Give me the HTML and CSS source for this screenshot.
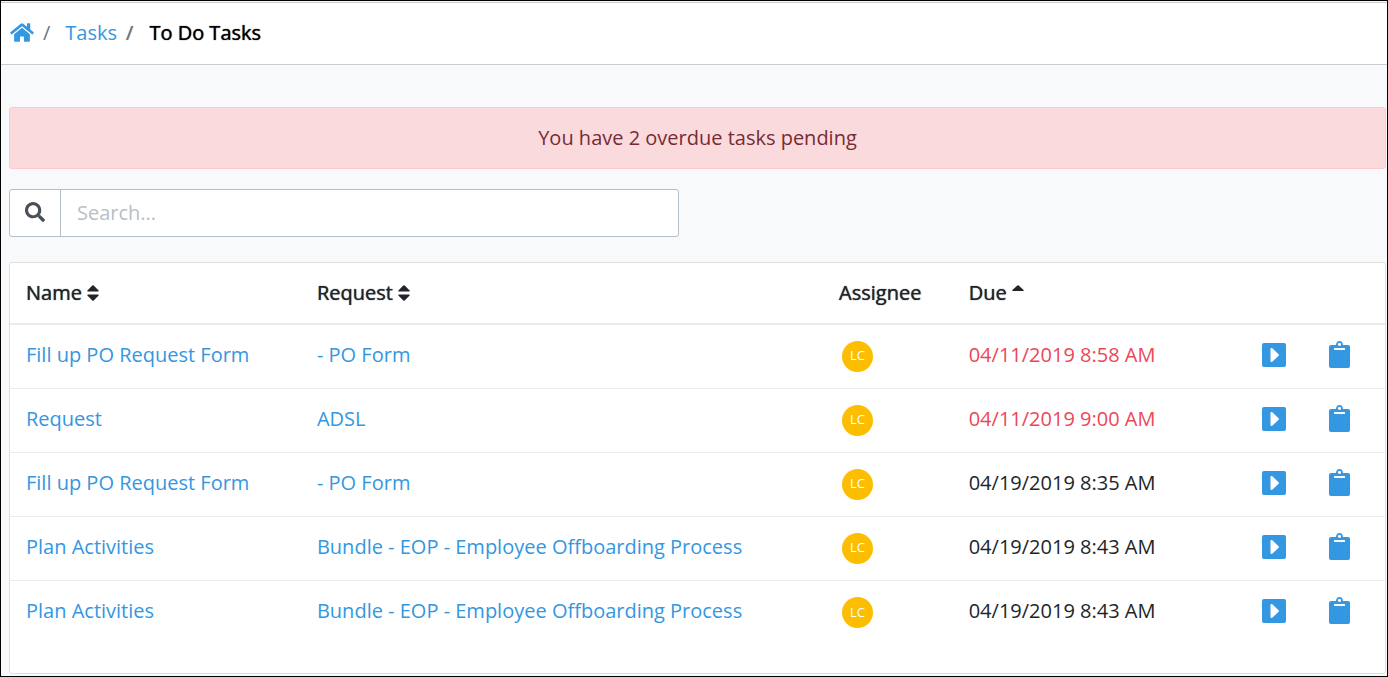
FILE: index.html
```html
<!DOCTYPE html>
<html lang="en">
<head>
<meta charset="utf-8">
<title>To Do Tasks</title>
<link rel="stylesheet" href="styles.css">
</head>
<body>
<svg class="sprite" aria-hidden="true">
  <symbol id="home" viewBox="0 0 576 512"><path d="M280.37 148.26L96 300.11V464a16 16 0 0 0 16 16l112.06-.29a16 16 0 0 0 15.92-16V368a16 16 0 0 1 16-16h64a16 16 0 0 1 16 16v95.64a16 16 0 0 0 16 16.05L464 480a16 16 0 0 0 16-16V300L295.67 148.26a12.19 12.19 0 0 0-15.3 0zM571.6 251.47L488 182.56V44.05a12 12 0 0 0-12-12h-56a12 12 0 0 0-12 12v72.61L318.47 43a48 48 0 0 0-61 0L4.34 251.47a12 12 0 0 0-1.6 16.9l25.5 31A12 12 0 0 0 45.15 301l235.22-193.74a12.19 12.19 0 0 1 15.3 0L530.9 301a12 12 0 0 0 16.9-1.6l25.5-31a12 12 0 0 0-1.7-16.93z"/></symbol>
  <symbol id="search" viewBox="0 0 512 512"><path d="M505 442.7L405.3 343c-4.500-4.500-10.600-7-17-7H372c27.600-35.300 44-79.700 44-128C416 93.100 322.900 0 208 0S0 93.100 0 208s93.100 208 208 208c48.300 0 92.700-16.400 128-44v16.300c0 6.400 2.500 12.500 7 17l99.700 99.700c9.400 9.400 24.600 9.400 33.900 0l28.300-28.300c9.400-9.400 9.400-24.600.1-34zM208 336c-70.700 0-128-57.200-128-128s57.200-128 128-128 128 57.200 128 128-57.200 128-128 128z"/></symbol>
  <symbol id="sort" viewBox="0 0 12 16"><path d="M1 6.500Q-.3 6.500.4 5.400L5.300.5Q6 0 6.700.5L11.600 5.400Q12.300 6.500 11 6.500zM1 9.500H11Q12.300 9.500 11.600 10.600L6.700 15.500Q6 16 5.300 15.500L.4 10.600Q-.3 9.500 1 9.500z"/></symbol>
  <symbol id="sort-up" viewBox="0 0 12 16"><path d="M1 6Q-.3 6 .4 5L5.300.4Q6 0 6.700.4L11.600 5Q12.300 6 11 6z"/></symbol>
  <symbol id="play" viewBox="0 0 24 24"><path fill-rule="evenodd" d="M2 0H22Q24 0 24 2V22Q24 24 22 24H2Q0 24 0 22V2Q0 0 2 0zM9.200 5Q8.500 5 8.500 6V18Q8.500 19 9.300 19L10.300 18.700L16.800 12.500Q17.300 12 16.800 11.500L10.300 5.300Z"/></symbol>
  <symbol id="clipboard" viewBox="0 0 21 28"><path fill-rule="evenodd" d="M2 4H7Q7.300 0 10.500 0T14 4H19Q21 4 21 6V25Q21 27 19 27H2Q0 27 0 25V6Q0 4 2 4zM10.500 1.700A1.600 1.600 0 1 0 10.500 4.900A1.600 1.600 0 1 0 10.500 1.700zM5.500 7Q5 7 5 7.500V8.500Q5 9 5.500 9H15.500Q16 9 16 8.500V7.500Q16 7 15.500 7z"/></symbol>
</svg>
<div class="page">
  <nav class="breadcrumb" aria-label="Breadcrumb">
    <a class="crumb-home" href="#" aria-label="Home"><svg class="icon-home"><use href="#home"/></svg></a>
    <span class="slash">/</span>
    <a class="crumb-link" href="#">Tasks</a>
    <span class="slash strong">/</span>
    <span class="crumb-current strong">To Do Tasks</span>
  </nav>
  <main class="content">
    <div class="alert" role="alert">You have 2 overdue tasks pending</div>
    <form class="search">
      <button class="search-button" type="button" aria-label="Search"><svg class="icon-search"><use href="#search"/></svg></button>
      <input class="search-input" type="text" placeholder="Search..." aria-label="Search tasks">
    </form>
    <section class="card">
      <table class="tasks">
        <colgroup><col class="col-name"><col class="col-request"><col class="col-assignee"><col class="col-due"><col></colgroup>
        <thead>
          <tr>
            <th class="strong">Name <svg class="icon-sort"><use href="#sort"/></svg></th>
            <th class="strong">Request <svg class="icon-sort"><use href="#sort"/></svg></th>
            <th class="strong">Assignee</th>
            <th class="strong">Due <svg class="icon-sort"><use href="#sort-up"/></svg></th>
            <th></th>
          </tr>
        </thead>
        <tbody>
          <tr>
            <td><a href="#">Fill up PO Request Form</a></td>
            <td><a href="#">- PO Form</a></td>
            <td><span class="avatar">LC</span></td>
            <td class="overdue">04/11/2019 8:58 AM</td>
            <td><div class="actions"><button type="button" aria-label="Open task"><svg class="icon-play"><use href="#play"/></svg></button><button type="button" aria-label="Request summary"><svg class="icon-clipboard"><use href="#clipboard"/></svg></button></div></td>
          </tr>
          <tr>
            <td><a href="#">Request</a></td>
            <td><a href="#">ADSL</a></td>
            <td><span class="avatar">LC</span></td>
            <td class="overdue">04/11/2019 9:00 AM</td>
            <td><div class="actions"><button type="button" aria-label="Open task"><svg class="icon-play"><use href="#play"/></svg></button><button type="button" aria-label="Request summary"><svg class="icon-clipboard"><use href="#clipboard"/></svg></button></div></td>
          </tr>
          <tr>
            <td><a href="#">Fill up PO Request Form</a></td>
            <td><a href="#">- PO Form</a></td>
            <td><span class="avatar">LC</span></td>
            <td>04/19/2019 8:35 AM</td>
            <td><div class="actions"><button type="button" aria-label="Open task"><svg class="icon-play"><use href="#play"/></svg></button><button type="button" aria-label="Request summary"><svg class="icon-clipboard"><use href="#clipboard"/></svg></button></div></td>
          </tr>
          <tr>
            <td><a href="#">Plan Activities</a></td>
            <td><a href="#">Bundle - EOP - Employee Offboarding Process</a></td>
            <td><span class="avatar">LC</span></td>
            <td>04/19/2019 8:43 AM</td>
            <td><div class="actions"><button type="button" aria-label="Open task"><svg class="icon-play"><use href="#play"/></svg></button><button type="button" aria-label="Request summary"><svg class="icon-clipboard"><use href="#clipboard"/></svg></button></div></td>
          </tr>
          <tr>
            <td><a href="#">Plan Activities</a></td>
            <td><a href="#">Bundle - EOP - Employee Offboarding Process</a></td>
            <td><span class="avatar">LC</span></td>
            <td>04/19/2019 8:43 AM</td>
            <td><div class="actions"><button type="button" aria-label="Open task"><svg class="icon-play"><use href="#play"/></svg></button><button type="button" aria-label="Request summary"><svg class="icon-clipboard"><use href="#clipboard"/></svg></button></div></td>
          </tr>
        </tbody>
      </table>
    </section>
  </main>
</div>
</body>
</html>
```

FILE: styles.css
```css
* { box-sizing: border-box; }
body {
  margin: 0;
  background: #f7f9fb;
  color: #212529;
  font: 20px/30px "Open Sans", sans-serif;
}
svg { fill: currentColor; }
a { color: #3397e1; text-decoration: none; }
.sprite { display: none; }
.strong { font-weight: 400; text-shadow: 0 0 1px currentColor; }
.page { min-height: 100vh; border: 1px solid #000; }

.breadcrumb {
  display: flex;
  align-items: center;
  height: 63px;
  padding: 0 9px 2px;
  margin-top: 1px;
  border-top: 1px solid #c9cdd1;
  border-bottom: 1px solid #c9cdd1;
  background: #fff;
}
.crumb-home { display: flex; }
.icon-home { width: 24px; height: 21px; }
.slash { color: #6c757d; margin-left: 9px; }
.crumb-link { margin-left: 15px; }
.crumb-current { color: #000; margin-left: 16px; }

.content { padding: 42px 1px 1px 8px; }
.alert {
  padding: 15px;
  border: 1px solid #f9c9ce;
  border-radius: 3px;
  background: #fadadd;
  color: #772b35;
  text-align: center;
}
.search {
  display: flex;
  width: calc(50% - 19px);
  height: 48px;
  margin: 20px 0 25px;
  border: 1px solid #b6bfc6;
  border-radius: 3px;
  background: #fff;
}
.search-button {
  display: flex;
  align-items: center;
  justify-content: center;
  width: 51px;
  padding: 0 0 2px;
  border: 0;
  border-right: 1px solid #b6bfc6;
  background: none;
  color: #495057;
}
.icon-search { width: 20px; height: 20px; }
.search-input {
  flex: 1;
  min-width: 0;
  padding: 0 16px;
  border: 0;
  background: none;
  color: inherit;
  font: inherit;
}
.search-input::placeholder { color: #b6bfc6; opacity: 1; }

.card {
  padding-bottom: 28px;
  border: 1px solid #dfdfdf;
  border-radius: 3px;
  background: #fff;
}
.tasks { width: 100%; table-layout: fixed; border-collapse: separate; border-spacing: 0; }
.col-name { width: 21.16%; }
.col-request { width: 37.97%; }
.col-assignee { width: 9.43%; }
.col-due { width: 18%; }
.tasks th { height: 62px; padding: 0 16px; border-bottom: 2px solid #e9ecef; text-align: left; white-space: nowrap; }
.tasks td { height: 64px; padding: 0 16px 4px; border-bottom: 1px solid #e9ecef; white-space: nowrap; }
.tasks tbody tr:last-child td { border-bottom: 0; }
.icon-sort { width: 12px; height: 16px; vertical-align: -1px; }
.overdue { color: #ed4757; }
.avatar {
  display: flex;
  align-items: center;
  justify-content: center;
  width: 31px;
  height: 31px;
  margin: 3px 0 0 3px;
  padding-bottom: 2px;
  border-radius: 50%;
  background: #fbbe02;
  color: #fff;
  font-size: 13px;
}
.actions { display: flex; align-items: center; justify-content: flex-end; gap: 43px; padding-right: 19px; }
.actions button { display: flex; padding: 0; border: 0; background: none; color: #3397e1; }
.icon-play { width: 24px; height: 24px; }
.icon-clipboard { width: 21px; height: 28px; }
```
